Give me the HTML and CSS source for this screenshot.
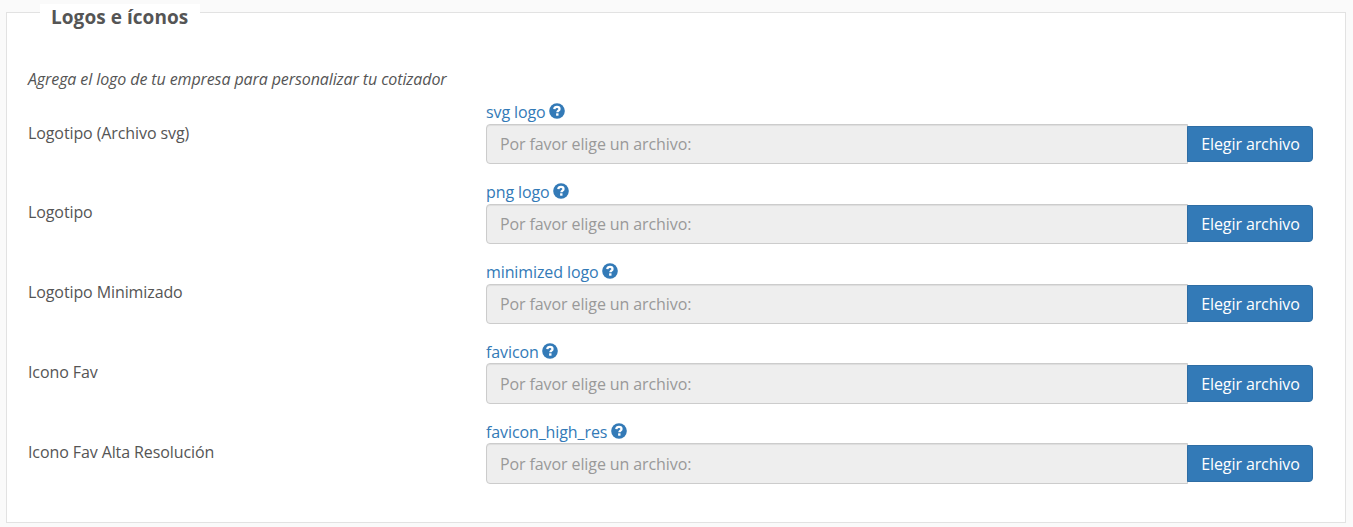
FILE: index.html
```
<!DOCTYPE html>
<html lang="es">
<head>
	<meta charset="utf-8">
	<title>Logos e íconos</title>
	<link rel="stylesheet" href="styles.css">
</head>
<body>

<svg width="0" height="0" class="defs">
    <symbol id="question" viewBox="0 0 16 16">
        <circle cx="8" cy="8" r="7.800" fill="#337ab7"/>
        <path d="M5.300 6.200C5.500 4.500 6.500 3.900 8 3.900c1.600 0 2.500.8 2.500 2 0 1.800-2.100 1.700-2.100 3.400" fill="none" stroke="#fff" stroke-width="2.300"/>
        <rect x="7.100" y="10.300" width="2.400" height="2.400" fill="#fff"/>
    </symbol>
</svg>

<fieldset class="panel">
    <legend>Logos e íconos</legend>
    <p class="intro">Agrega el logo de tu empresa para personalizar tu cotizador</p>

    <div class="row">
        <label class="name">Logotipo (Archivo svg)</label>
        <div class="field">
            <a class="help">svg logo <svg class="icon"><use href="#question"/></svg></a>
            <div class="file">
                <input type="text" placeholder="Por favor elige un archivo:" disabled>
                <button type="button">Elegir archivo</button>
            </div>
        </div>
    </div>

    <div class="row">
        <label class="name">Logotipo</label>
        <div class="field">
            <a class="help">png logo <svg class="icon"><use href="#question"/></svg></a>
            <div class="file">
                <input type="text" placeholder="Por favor elige un archivo:" disabled>
                <button type="button">Elegir archivo</button>
            </div>
        </div>
    </div>

    <div class="row">
        <label class="name">Logotipo Minimizado</label>
        <div class="field">
            <a class="help">minimized logo <svg class="icon"><use href="#question"/></svg></a>
            <div class="file">
                <input type="text" placeholder="Por favor elige un archivo:" disabled>
                <button type="button">Elegir archivo</button>
            </div>
        </div>
    </div>

    <div class="row">
        <label class="name">Icono Fav</label>
        <div class="field">
            <a class="help">favicon <svg class="icon"><use href="#question"/></svg></a>
            <div class="file">
                <input type="text" placeholder="Por favor elige un archivo:" disabled>
                <button type="button">Elegir archivo</button>
            </div>
        </div>
    </div>

    <div class="row">
        <label class="name">Icono Fav Alta Resolución</label>
        <div class="field">
            <a class="help">favicon_high_res <svg class="icon"><use href="#question"/></svg></a>
            <div class="file">
                <input type="text" placeholder="Por favor elige un archivo:" disabled>
                <button type="button">Elegir archivo</button>
            </div>
        </div>
    </div>
</fieldset>

</body>
</html>
```

FILE: styles.css
```
* { box-sizing: border-box; }
body {
    margin: 0;
    padding: 4px 7px 0 6px;
    background: #fafafa;
    color: #555;
    font: 16px/22px "Open Sans", sans-serif;
    letter-spacing: -.1px;
}
.defs { display: block; }
.panel {
    margin: 0;
    padding: 0 32px 0 21px;
    height: 519px;
    border: 1px solid #e2e2e2;
    background: #fff;
}
.panel legend {
    width: 160px;
    margin-left: 12px;
    padding: 4px 11px 0;
    height: 17px;
    line-height: 19px;
    font-size: 19px;
    font-weight: 700;
    letter-spacing: .05px;
    background: #fff;
    white-space: nowrap;
}
.intro {
    margin: 47px 0 11px;
    font-style: italic;
}
.row {
    display: flex;
    height: 79.8px;
}
.row .name {
    width: 458px;
    padding-top: 20.6px;
}
.row .field { flex: 1; }
.help {
    display: flex;
    align-items: center;
    gap: 3.5px;
    height: 23px;
    padding-bottom: .2px;
    color: #337ab7;
}
.help .icon {
    width: 16px; height: 16px;
    margin-top: -2px;
}
.file {
    display: flex;
    align-items: center;
}
.file input {
    flex: 1;
    height: 40.4px;
    padding: 6.6px 13px 6px;
    border: 1px solid #ccc;
    border-radius: 4px 0 0 4px;
    background: #eee;
    box-shadow: inset 0 1px 1px rgba(0,0,0,.075);
    font: inherit;
    letter-spacing: inherit;
}
.file input::placeholder { color: #999; }
.file button {
    width: 126px; height: 36.8px;
    margin: 0 0 .5px -1px;
    padding: 1px 0 0 1px;
    border: 1px solid #2e6da4;
    border-radius: 0 4px 4px 0;
    background: #337ab7;
    color: #fff;
    font: inherit;
    letter-spacing: inherit;
}
```
